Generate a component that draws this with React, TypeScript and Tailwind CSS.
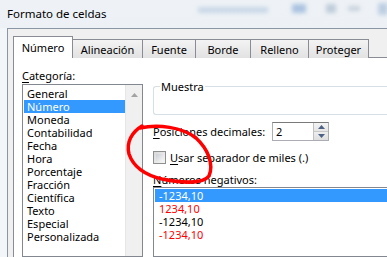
import React from 'react';

const font = { fontFamily: '"Noto Sans", "Segoe UI", sans-serif' };

const tabs = ['Alineación', 'Fuente', 'Borde', 'Relleno', 'Proteger'];
const tabWidths = ['w-[71px]', 'w-[54px]', 'w-[56px]', 'w-[59px]', 'w-[61px]'];

const categories = [
  'General',
  'Número',
  'Moneda',
  'Contabilidad',
  'Fecha',
  'Hora',
  'Porcentaje',
  'Fracción',
  'Científica',
  'Texto',
  'Especial',
  'Personalizada',
];

const negatives = [
  { text: '-1234,10', red: false },
  { text: '1234,10', red: true },
  { text: '-1234,10', red: false },
  { text: '-1234,10', red: true },
];

export default function App() {
  return (
    <div
      className="relative w-[387px] h-[257px] overflow-hidden bg-gradient-to-b from-[#eef2f6] to-[#e4eaf0] text-[11px] leading-[13px] text-black"
      style={font}
    >
      {/* title bar (glass) */}
      <div className="relative h-[28px] flex items-center pl-[7px] pb-[1px] text-[11.5px]">
        <span className="relative z-10">Formato de celdas</span>
        <div className="absolute left-[198px] top-[7px] w-[70px] h-[6px] bg-[#b9cce0] blur-[2px] opacity-70" />
        <div className="absolute left-[292px] top-[4px] w-[14px] h-[9px] bg-[#8fb0d8] blur-[2px] opacity-70" />
        <div className="absolute left-[326px] top-[4px] w-[10px] h-[9px] bg-[#a0b4c8] blur-[2px] opacity-60" />
        <div className="absolute left-[348px] top-[6px] w-[12px] h-[5px] bg-[#b0bccc] blur-[2px] opacity-60" />
        <div className="absolute left-[378px] top-[3px] w-[10px] h-[12px] bg-[#9fb8d6] blur-[2px] opacity-60" />
      </div>

      <div className="flex h-[229px]">
        <div className="w-[7px] shrink-0 bg-[#f3f6f9]" />
        <div className="flex-1 flex flex-col bg-[#f0f0f0] border-l border-t border-[#8b96a4] pl-[5px] pt-[7px]">
          {/* tabs */}
          <div className="flex items-end h-[22px] relative z-10">
            <div className="w-[60px] h-[22px] bg-white border border-b-0 border-[#898c95] flex items-center justify-center pb-[1px]">
              Número
            </div>
            {tabs.map((t, i) => (
              <div
                key={t}
                className={`${tabWidths[i]} h-[19px] -ml-px first:ml-0 bg-gradient-to-b from-[#f3f3f3] to-[#e2e2e2] border border-b-0 border-[#898c95] flex items-center justify-center`}
              >
                {t}
              </div>
            ))}
          </div>

          {/* panel */}
          <div className="flex-1 -mt-px bg-white border-l border-t border-[#898c95] flex pl-[8px] pt-[11px]">
            {/* left column */}
            <div className="w-[121px] shrink-0 flex flex-col">
              <div className="h-[14px] mb-[1px]">
                <span className="underline underline-offset-2">C</span>ategoría:
              </div>
              <div className="flex-1 border border-[#828790] flex pl-[1px] pt-[2px]">
                <div className="flex-1 flex flex-col">
                  {categories.map((c) => (
                    <div
                      key={c}
                      className={`h-[13px] pl-[3px] whitespace-nowrap ${c === 'Número' ? 'bg-[#3399ff] text-white' : ''}`}
                    >
                      {c}
                    </div>
                  ))}
                </div>
                <div className="w-[17px] -mt-[2px] bg-[#f0f0f0] border-l border-[#e6e6e6] flex justify-center pt-[8px]">
                  <svg width="7" height="4" viewBox="0 0 7 4">
                    <path d="M3.5 0 L7 4 L0 4 Z" fill="#a3a3a3" />
                  </svg>
                </div>
              </div>
            </div>

            {/* right column */}
            <div className="flex-1 flex flex-col pl-[10px] pt-[17px]">
              <div className="relative h-[29px] border border-r-0 border-[#d5dfe5] rounded-l-[3px]">
                <span className="absolute left-[6px] -top-[7px] bg-white px-px">Muestra</span>
              </div>

              <div className="flex items-center mt-[7px] h-[19px]">
                <span className="w-[119px] shrink-0 whitespace-nowrap">
                  <span className="underline underline-offset-2">P</span>osiciones decimales:
                </span>
                <div className="w-[57px] h-[19px] border border-[#abadb3] border-t-[#7a7a7a] flex items-stretch">
                  <div className="flex-1 pl-[3px] flex items-center">2</div>
                  <div className="w-[15px] flex flex-col border-l border-[#c0c0c0]">
                    <div className="flex-1 bg-gradient-to-b from-[#f4f4f4] to-[#e6e6e6] flex items-center justify-center border-b border-[#c8c8c8]">
                      <svg width="7" height="4" viewBox="0 0 7 4">
                        <path d="M3.5 0 L7 4 L0 4 Z" fill="#4d6185" />
                      </svg>
                    </div>
                    <div className="flex-1 bg-gradient-to-b from-[#eeeeee] to-[#dedede] flex items-center justify-center">
                      <svg width="7" height="4" viewBox="0 0 7 4">
                        <path d="M0 0 L7 0 L3.5 4 Z" fill="#4d6185" />
                      </svg>
                    </div>
                  </div>
                </div>
              </div>

              <div className="flex items-center mt-[10px] h-[13px]">
                <div className="w-[13px] h-[13px] shrink-0 border border-[#8e8f8f] bg-gradient-to-br from-[#d8d8d8] to-[#f6f6f6] p-[2px]">
                  <div className="w-full h-full bg-gradient-to-br from-[#cbcfd5] to-[#f5f5f5]" />
                </div>
                <span className="ml-[4px] whitespace-nowrap">
                  <span className="underline underline-offset-2">U</span>sar separador de miles (.)
                </span>
              </div>

              <div className="mt-[9px] h-[13px] whitespace-nowrap">
                <span className="underline underline-offset-2">N</span>úmeros negativos:
              </div>

              <div className="flex-1 mt-[1px] border border-r-0 border-[#828790] pt-[1px] pl-[1px]">
                {negatives.map((n, i) => (
                  <div
                    key={i}
                    className={`h-[13px] pl-[4px] ${i === 0 ? 'bg-[#3399ff] text-white' : n.red ? 'text-[#ff0000]' : ''}`}
                  >
                    {n.text}
                  </div>
                ))}
              </div>
            </div>
          </div>
        </div>
      </div>

      {/* red hand-drawn circle */}
      <svg className="absolute left-0 top-0 pointer-events-none" width="387" height="257">
        <path
          d="M140 128 C 158 124, 182 127, 196 138 C 208 149, 214 164, 209 176 C 203 184, 182 183, 162 179 C 145 175, 133 166, 129 154 C 126 142, 132 132, 142 126"
          fill="none"
          stroke="#ff0000"
          strokeWidth="3.5"
          strokeLinecap="round"
        />
      </svg>
    </div>
  );
}
